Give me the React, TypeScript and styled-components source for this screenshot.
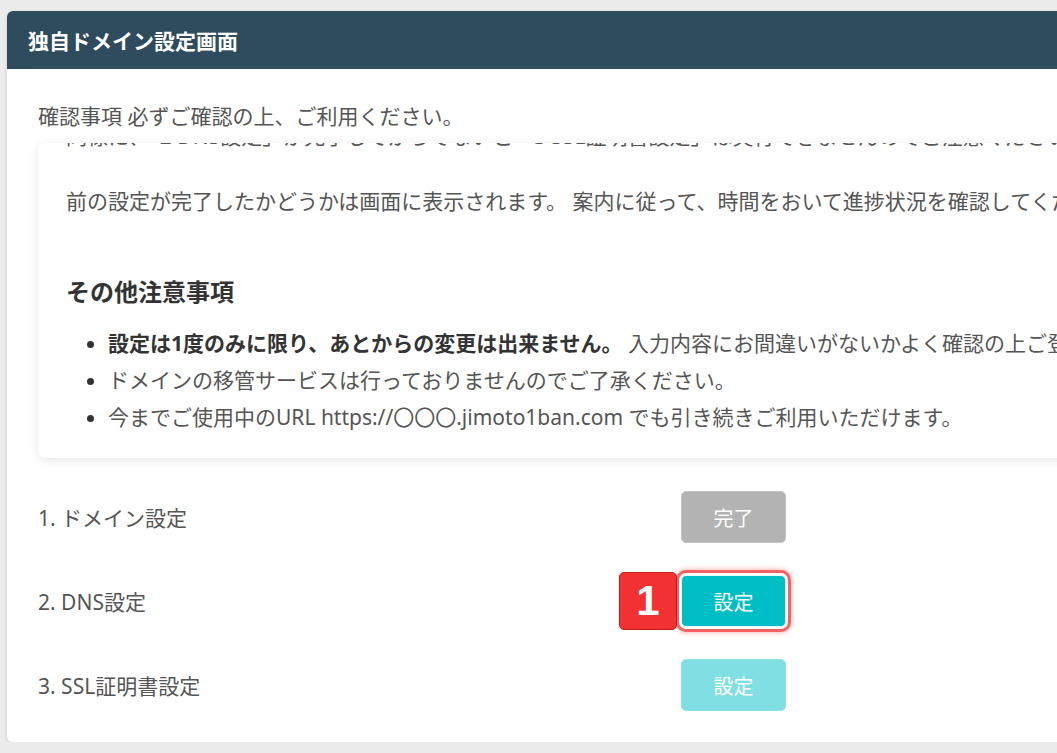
import styled, { createGlobalStyle, css } from "styled-components";

const GlobalStyle = createGlobalStyle`
  html, body {
    margin: 0;
    background: #ececec;
    overflow: hidden;
  }
  body {
    font-family: "Noto Sans", "Noto Sans CJK JP", sans-serif;
    color: #555;
  }
`;

const Page = styled.div`
  padding: 11px 0 0 7px;
  width: 1600px;
`;

const Card = styled.section`
  width: 1500px;
  border-radius: 6px;
  background: #fff;
  box-shadow: 0 1px 4px rgba(0, 0, 0, 0.12);
  overflow: hidden;
`;

const CardHeader = styled.h1`
  margin: 0;
  height: 58px;
  display: flex;
  align-items: center;
  padding: 0 21px;
  background: #2f4b5e;
  color: #fff;
  font-size: 21px;
  font-weight: 700;
`;

const CardBody = styled.div`
  padding: 29px 31px 31px 31px;
`;

const Notice = styled.p`
  margin: 0 0 9px;
  font-size: 21px;
  line-height: 36px;
  color: #555;
`;

const NoteBox = styled.div`
  height: 315px;
  box-sizing: border-box;
  padding: 0 28px 22px;
  display: flex;
  flex-direction: column;
  justify-content: flex-end;
  overflow: hidden;
  border-radius: 8px;
  background: #fff;
  box-shadow: 0 2px 10px rgba(0, 0, 0, 0.1);
`;

const NoteText = styled.p<{ $gap?: number }>`
  margin: 0 0 ${(p) => p.$gap ?? 0}px;
  font-size: 21px;
  line-height: 36px;
  color: #555;
  white-space: nowrap;
  flex-shrink: 0;
`;

const NoteHeading = styled.h3`
  margin: 55px 0 15px;
  font-size: 24px;
  line-height: 36px;
  font-weight: 700;
  color: #333;
  flex-shrink: 0;
`;

const NoteList = styled.ul`
  margin: 0;
  padding-left: 42px;
  list-style: disc;
  flex-shrink: 0;
`;

const NoteItem = styled.li`
  font-size: 21px;
  line-height: 37px;
  color: #555;
  white-space: nowrap;
  &::marker {
    color: #333;
  }
`;

const Strong = styled.strong`
  font-weight: 700;
  color: #333;
`;

const Steps = styled.div`
  margin-top: 33px;
  display: flex;
  flex-direction: column;
  gap: 32px;
`;

const StepRow = styled.div`
  display: grid;
  grid-template-columns: 643px auto;
  align-items: center;
  height: 52px;
`;

const StepLabel = styled.span`
  font-size: 21px;
  color: #555;
`;

const ButtonSlot = styled.div`
  position: relative;
  width: fit-content;
`;

type Variant = "done" | "active" | "disabled";

const variants = {
  done: css`
    background: #b3b3b3;
    border-color: #c4c4c4;
  `,
  active: css`
    background: #00bec5;
    border-color: #e8fbfc;
  `,
  disabled: css`
    background: #80dfe3;
    border-color: #8fe3e7;
  `,
};

const StepButton = styled.button<{ $variant: Variant; $highlight?: boolean }>`
  width: 105px;
  height: 52px;
  box-sizing: border-box;
  border: 1px solid;
  border-radius: 5px;
  color: #fff;
  font-family: inherit;
  font-size: 20px;
  cursor: pointer;
  ${(p) => variants[p.$variant]}
  ${(p) =>
    p.$highlight &&
    css`
      box-shadow: 0 0 0 2px #fff, 0 0 0 5px #f26262,
        0 0 4px 6px rgba(241, 90, 90, 0.4);
    `}
`;

const Badge = styled.span`
  position: absolute;
  right: calc(100% + 4px);
  top: 50%;
  transform: translateY(-50%);
  width: 58px;
  height: 58px;
  box-sizing: border-box;
  display: flex;
  align-items: center;
  justify-content: center;
  background: #f23232;
  border: 1px solid #c21d1d;
  border-radius: 5px;
  color: #fff;
  font-family: "Liberation Sans", Arial, sans-serif;
  font-size: 42px;
  font-weight: 700;
`;

const steps: { label: string; text: string; variant: Variant; badge?: string }[] = [
  { label: "1. ドメイン設定", text: "完了", variant: "done" },
  { label: "2. DNS設定", text: "設定", variant: "active", badge: "1" },
  { label: "3. SSL証明書設定", text: "設定", variant: "disabled" },
];

const App = () => {
  return (
    <>
      <GlobalStyle />
      <Page>
        <Card>
          <CardHeader>独自ドメイン設定画面</CardHeader>
          <CardBody>
            <Notice>確認事項 必ずご確認の上、ご利用ください。</Notice>
            <NoteBox>
              <NoteText $gap={27}>
                「1 ドメイン設定」が完了してからでないと「2 DNS設定」は実行できません。
              </NoteText>
              <NoteText $gap={29}>
                同様に、「2 DNS設定」が完了してからでないと「3 SSL証明書設定」は実行できませんのでご注意ください。
              </NoteText>
              <NoteText>
                前の設定が完了したかどうかは画面に表示されます。 案内に従って、時間をおいて進捗状況を確認してください。
              </NoteText>
              <NoteHeading>その他注意事項</NoteHeading>
              <NoteList>
                <NoteItem>
                  <Strong>設定は1度のみに限り、あとからの変更は出来ません。</Strong>{" "}
                  入力内容にお間違いがないかよく確認の上ご登録ください。
                </NoteItem>
                <NoteItem>ドメインの移管サービスは行っておりませんのでご了承ください。</NoteItem>
                <NoteItem>
                  今までご使用中のURL https://〇〇〇.jimoto1ban.com でも引き続きご利用いただけます。
                </NoteItem>
              </NoteList>
            </NoteBox>
            <Steps>
              {steps.map((step) => (
                <StepRow key={step.label}>
                  <StepLabel>{step.label}</StepLabel>
                  <ButtonSlot>
                    {step.badge && <Badge>{step.badge}</Badge>}
                    <StepButton
                      type="button"
                      $variant={step.variant}
                      $highlight={!!step.badge}
                      disabled={step.variant !== "active"}
                    >
                      {step.text}
                    </StepButton>
                  </ButtonSlot>
                </StepRow>
              ))}
            </Steps>
          </CardBody>
        </Card>
      </Page>
    </>
  );
};

export default App;
